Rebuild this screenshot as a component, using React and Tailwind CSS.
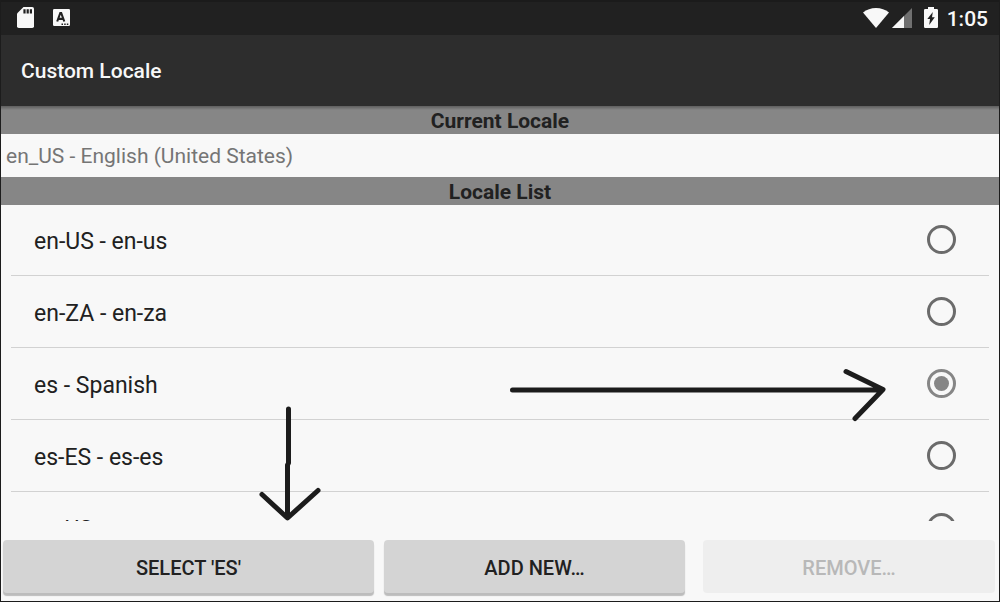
import { useState } from "react";

const LOCALES = [
  { code: "en-US", label: "en-US - en-us" },
  { code: "en-ZA", label: "en-ZA - en-za" },
  { code: "es", label: "es - Spanish" },
  { code: "es-ES", label: "es-ES - es-es" },
  { code: "es-US", label: "es-US - es-us" },
];

function StatusBar() {
  return (
    <div className="flex h-[35px] shrink-0 items-center justify-between border-t-2 border-[#1b1b1b] bg-[#212121] pr-[11px] pb-0.5 pl-4 text-[#f8f8f8]">
      <div className="flex items-center gap-[19px]">
        <svg width="17" height="21" viewBox="0 0 17 21" aria-hidden="true">
          <path d="M6.5 0H15.2Q17 0 17 1.8V19.2Q17 21 15.2 21H1.8Q0 21 0 19.2V6.5Z" fill="#f8f8f8" />
          <path d="M6.4 2.2h2.2v4.2H6.4zM9.6 2.2h2.2v4.2H9.6zM12.8 2.2H15v4.2h-2.2z" fill="#212121" />
        </svg>
        <svg width="17" height="17" viewBox="0 0 17 17" aria-hidden="true">
          <rect width="17" height="17" rx="1.2" fill="#f8f8f8" />
          <path d="M4.2 12.5L7.3 4H8.200L11.300 12.500M5.400 9.900h4.800" fill="none" stroke="#212121" strokeWidth="2.1" />
          <path d="M8.500 14.500h1.500v1.500H8.500zM11.200 14.500h1.500v1.500h-1.500zM13.800 14.500h1.500v1.500h-1.500z" fill="#212121" />
        </svg>
      </div>
      <div className="flex items-center">
        <svg width="26" height="20" viewBox="0 0 26 20" aria-hidden="true">
          <path d="M13 20L0 4.500Q5.500 0 13 0T26 4.500Z" fill="#f8f8f8" />
        </svg>
        <svg className="ml-[3px]" width="20" height="20" viewBox="0 0 20 20" aria-hidden="true">
          <path d="M20 0V20H0Z" fill="#707070" />
          <path d="M12 8V20H0Z" fill="#f8f8f8" />
        </svg>
        <svg className="ml-3" width="14" height="21" viewBox="0 0 14 21" aria-hidden="true">
          <path d="M4 0H10V2H12.800Q14 2 14 3.200V19.800Q14 21 12.800 21H1.200Q0 21 0 19.800V3.200Q0 2 1.200 2H4Z" fill="#f8f8f8" />
          <path d="M8.800 5L3.300 12H6L5.200 18L10.800 10.300H8Z" fill="#212121" />
        </svg>
        <span className="ml-[9px] pt-0.5 text-[21px] leading-6 font-medium">1:05</span>
      </div>
    </div>
  );
}

function SectionHeading({ children }) {
  return (
    <h2 className="h-7 shrink-0 bg-[#868686] text-center text-[21px] leading-[30px] font-bold">{children}</h2>
  );
}

function LocaleRow({ locale, checked, onSelect }) {
  return (
    <li className="h-[72px] border-b border-[#d2d2d2]">
      <label className="flex h-full items-center justify-between pr-[33px] pl-[23px]">
        <span className="pt-1 text-[23px] leading-7">{locale.label}</span>
        <input
          type="radio"
          name="locale"
          value={locale.code}
          checked={checked}
          onChange={onSelect}
          className="grid size-[29px] appearance-none place-content-center rounded-full border-3 border-[#6b6b6b] checked:border-[#868686] checked:before:size-[15px] checked:before:rounded-full checked:before:bg-[#868686] checked:before:content-['']"
        />
      </label>
    </li>
  );
}

function Arrows() {
  return (
    <svg
      className="pointer-events-none absolute top-0 -left-px"
      width="1000"
      height="602"
      viewBox="0 0 1000 602"
      fill="none"
      stroke="#1c1c1c"
      strokeWidth="5"
      strokeLinecap="round"
      strokeLinejoin="round"
      aria-hidden="true"
    >
      <path d="M512.500 390H882M846 371.500L883 389.500L855 418.500" />
      <path d="M288.500 409V463L287.500 465V517M262 494.500L287.500 518L318 490.500" />
    </svg>
  );
}

export default function App() {
  const [selected, setSelected] = useState("es");

  return (
    <div className="relative flex h-screen flex-col overflow-hidden border-x border-b border-[#1c1c1c] bg-[#f8f8f8] font-['Roboto',sans-serif] text-[#212121]">
      <StatusBar />
      <header className="flex h-[71px] shrink-0 items-center bg-[#2d2d2d] px-5">
        <h1 className="text-[21px] leading-7 font-medium text-[#f8f8f8]">Custom Locale</h1>
      </header>
      <div className="z-10 -mb-1 h-1 shrink-0 bg-linear-to-b from-black/30 to-transparent" />
      <SectionHeading>Current Locale</SectionHeading>
      <p className="h-[43px] shrink-0 px-[5px] text-[21px] leading-[45px] text-[#757575]">
        en_US - English (United States)
      </p>
      <SectionHeading>Locale List</SectionHeading>
      <ul className="-mt-px min-h-0 flex-1 overflow-hidden px-[10px]">
        {LOCALES.map((locale) => (
          <LocaleRow
            key={locale.code}
            locale={locale}
            checked={selected === locale.code}
            onSelect={() => setSelected(locale.code)}
          />
        ))}
      </ul>
      <div className="flex shrink-0 items-start pt-[19px] pr-1 pb-2 pl-0.5 text-[20px] leading-6 font-medium">
        <button type="button" className="h-[53px] flex-[371] rounded-sm bg-[#d4d4d4] pt-0.5 uppercase shadow-[0_3px_1px_#bcbcbc]">
          Select '{selected}'
        </button>
        <button type="button" className="ml-[10px] h-[53px] flex-[301] rounded-sm bg-[#d4d4d4] pt-0.5 uppercase shadow-[0_3px_1px_#bcbcbc]">
          Add new…
        </button>
        <button type="button" disabled className="ml-[18px] h-[53px] flex-[292] rounded-sm bg-[#eeeeee] pt-0.5 text-[#b8b8b8] uppercase">
          Remove…
        </button>
      </div>
      <Arrows />
    </div>
  );
}
